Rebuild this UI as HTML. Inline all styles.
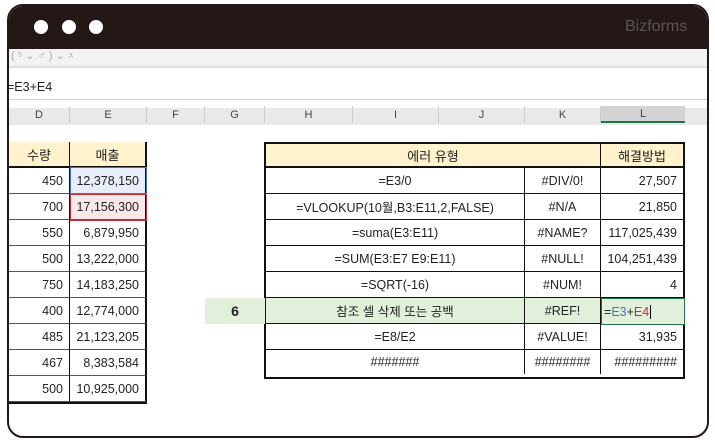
<!DOCTYPE html>
<html><head><meta charset="utf-8"><style>
*{margin:0;padding:0;box-sizing:border-box}
body{width:715px;height:440px;background:#fff;position:relative;overflow:hidden;font-family:"Liberation Sans","Noto Sans CJK KR",sans-serif;font-size:12.5px;color:#222}
.win{position:absolute;left:7px;top:4px;width:702px;height:434px;border:2px solid #231815;border-radius:16px;overflow:hidden;background:#fff}
.a{position:absolute}
.c{position:absolute;display:flex;align-items:center;justify-content:center;height:26px}
.r{justify-content:flex-end;padding-right:6px}
</style></head><body>
<div class="win">
 <div class="a" style="left:0;top:0;width:700px;height:43px;background:#231815"></div>
 <div class="a" style="left:25px;top:14px;width:14px;height:14px;border-radius:50%;background:#fff"></div>
 <div class="a" style="left:53px;top:14px;width:14px;height:14px;border-radius:50%;background:#fff"></div>
 <div class="a" style="left:80px;top:14px;width:14px;height:14px;border-radius:50%;background:#fff"></div>
 <div class="a" style="left:616px;top:12px;color:#5a5352;font-size:16px">Bizforms</div>
 <div class="a" style="left:0;top:43px;width:700px;height:19px;background:#f3f3f3;border-bottom:2px solid #e0e0e0"></div>
 <div class="a" style="left:2px;top:43px;color:#aaa;font-size:11px">( ⁵ ⌄ ♂ ) ⌄ ⩡</div>
 <div class="a" style="left:0;top:62px;width:700px;height:32px;background:#fff;border-bottom:1px solid #d4d4d4"></div>
 <div class="a" style="left:-2px;top:74px;font-size:12.5px">=E3+E4</div>
 <div class="a" style="left:0;top:102px;width:700px;height:17px;background:#e9e9e9"></div>
</div>
<div class="a" style="left:9px;top:106px;width:691px;height:17px;font-size:11px;color:#444">
 <div class="c" style="left:0;width:61px;height:17px;border-right:1px solid #ccc">D</div>
 <div class="c" style="left:61px;width:77px;height:17px;border-right:1px solid #ccc">E</div>
 <div class="c" style="left:138px;width:58px;height:17px;border-right:1px solid #ccc">F</div>
 <div class="c" style="left:196px;width:60px;height:17px;border-right:1px solid #ccc">G</div>
 <div class="c" style="left:256px;width:88px;height:17px;border-right:1px solid #ccc">H</div>
 <div class="c" style="left:344px;width:86px;height:17px;border-right:1px solid #ccc">I</div>
 <div class="c" style="left:430px;width:86px;height:17px;border-right:1px solid #ccc">J</div>
 <div class="c" style="left:516px;width:76px;height:17px;border-right:1px solid #ccc">K</div>
 <div class="c" style="left:592px;width:84px;height:17px;background:#d3d3d3;border-bottom:2px solid #217346">L</div>
</div>
<div class="a" style="left:9px;top:142px;width:138px;height:262px;border:2px solid #111;border-left:none"></div>
<div class="c" style="left:9px;top:142px;width:61px;background:#fff2cc;border-right:1px solid #111;border-bottom:2px solid #111;font-size:13px">수량</div>
<div class="c" style="left:70px;top:142px;width:77px;background:#fff2cc;border-right:2px solid #111;border-bottom:2px solid #111;font-size:13px">매출</div>
<div id="lt"></div>
<div class="a" style="left:264px;top:142px;width:421px;height:237px;border:2px solid #111"></div>
<div class="c" style="left:266px;top:144px;width:335px;height:24px;background:#fff2cc;border-bottom:2px solid #111;border-right:1px solid #111;font-size:13px">에러 유형</div>
<div class="c" style="left:601px;top:144px;width:82px;height:24px;background:#fff2cc;border-bottom:2px solid #111;font-size:13px">해결방법</div>
<div id="rt"></div>
<script>
var L=[["450","12,378,150"],["700","17,156,300"],["550","6,879,950"],["500","13,222,000"],["750","14,183,250"],["400","12,774,000"],["485","21,123,205"],["467","8,383,584"],["500","10,925,000"]];
var h="";
L.forEach(function(r,i){var y=168+i*26;
var bg=i==0?"#e8eef9":i==1?"#f9e8e8":"#fff";
h+='<div class="c r" style="left:9px;top:'+y+'px;width:61px;border-right:1px solid #111;border-bottom:1px solid #555">'+r[0]+'</div>';
h+='<div class="c r" style="left:70px;top:'+y+'px;width:77px;background:'+bg+';border-right:2px solid #111;border-bottom:1px solid #555">'+r[1]+'</div>';});
h+='<div class="a" style="left:70px;top:167px;width:77px;height:27px;border:1.5px solid #4472c4"></div>';
h+='<div class="a" style="left:70px;top:194px;width:77px;height:27px;border:1.5px solid #c0303a"></div>';
document.getElementById("lt").innerHTML=h;
var R=[["=E3/0","#DIV/0!","27,507"],["=VLOOKUP(10월,B3:E11,2,FALSE)","#N/A","21,850"],["=suma(E3:E11)","#NAME?","117,025,439"],["=SUM(E3:E7 E9:E11)","#NULL!","104,251,439"],["=SQRT(-16)","#NUM!","4"],["참조 셀 삭제 또는 공백","#REF!",""],["=E8/E2","#VALUE!","31,935"],["#######","########","#########"]];
h="";
R.forEach(function(r,i){var y=168+i*26;var g=i==5;var bg=g?"#e2efda":"#fff";var bb=i<7?"border-bottom:1px solid #111;":"";var hh=i==7?"height:24px;":"";
h+='<div class="c" style="left:266px;top:'+y+'px;width:259px;'+hh+'background:'+bg+';border-right:1px solid #111;'+bb+'">'+r[0]+'</div>';
h+='<div class="c" style="left:525px;top:'+y+'px;width:76px;'+hh+'background:'+bg+';border-right:1px solid #111;'+bb+'">'+r[1]+'</div>';
h+='<div class="c r" style="left:601px;top:'+y+'px;width:82px;'+hh+bb+'">'+r[2]+'</div>';});
h+='<div class="a" style="left:205px;top:298px;width:60px;height:26px;background:#e2efda;display:flex;align-items:center;justify-content:center;font-weight:bold;font-size:14px">6</div>';
h+='<div class="a" style="left:601px;top:298px;width:84px;height:27px;background:#e2efda;border:1.5px solid #217346;padding-left:2px;display:flex;align-items:center"><span>=</span><span style="color:#4472c4">E3</span><span>+</span><span style="color:#c0303a">E4</span><span style="border-left:1px solid #000;height:14px;margin-left:1px"></span></div>';
document.getElementById("rt").innerHTML=h;
</script>
</body></html>
